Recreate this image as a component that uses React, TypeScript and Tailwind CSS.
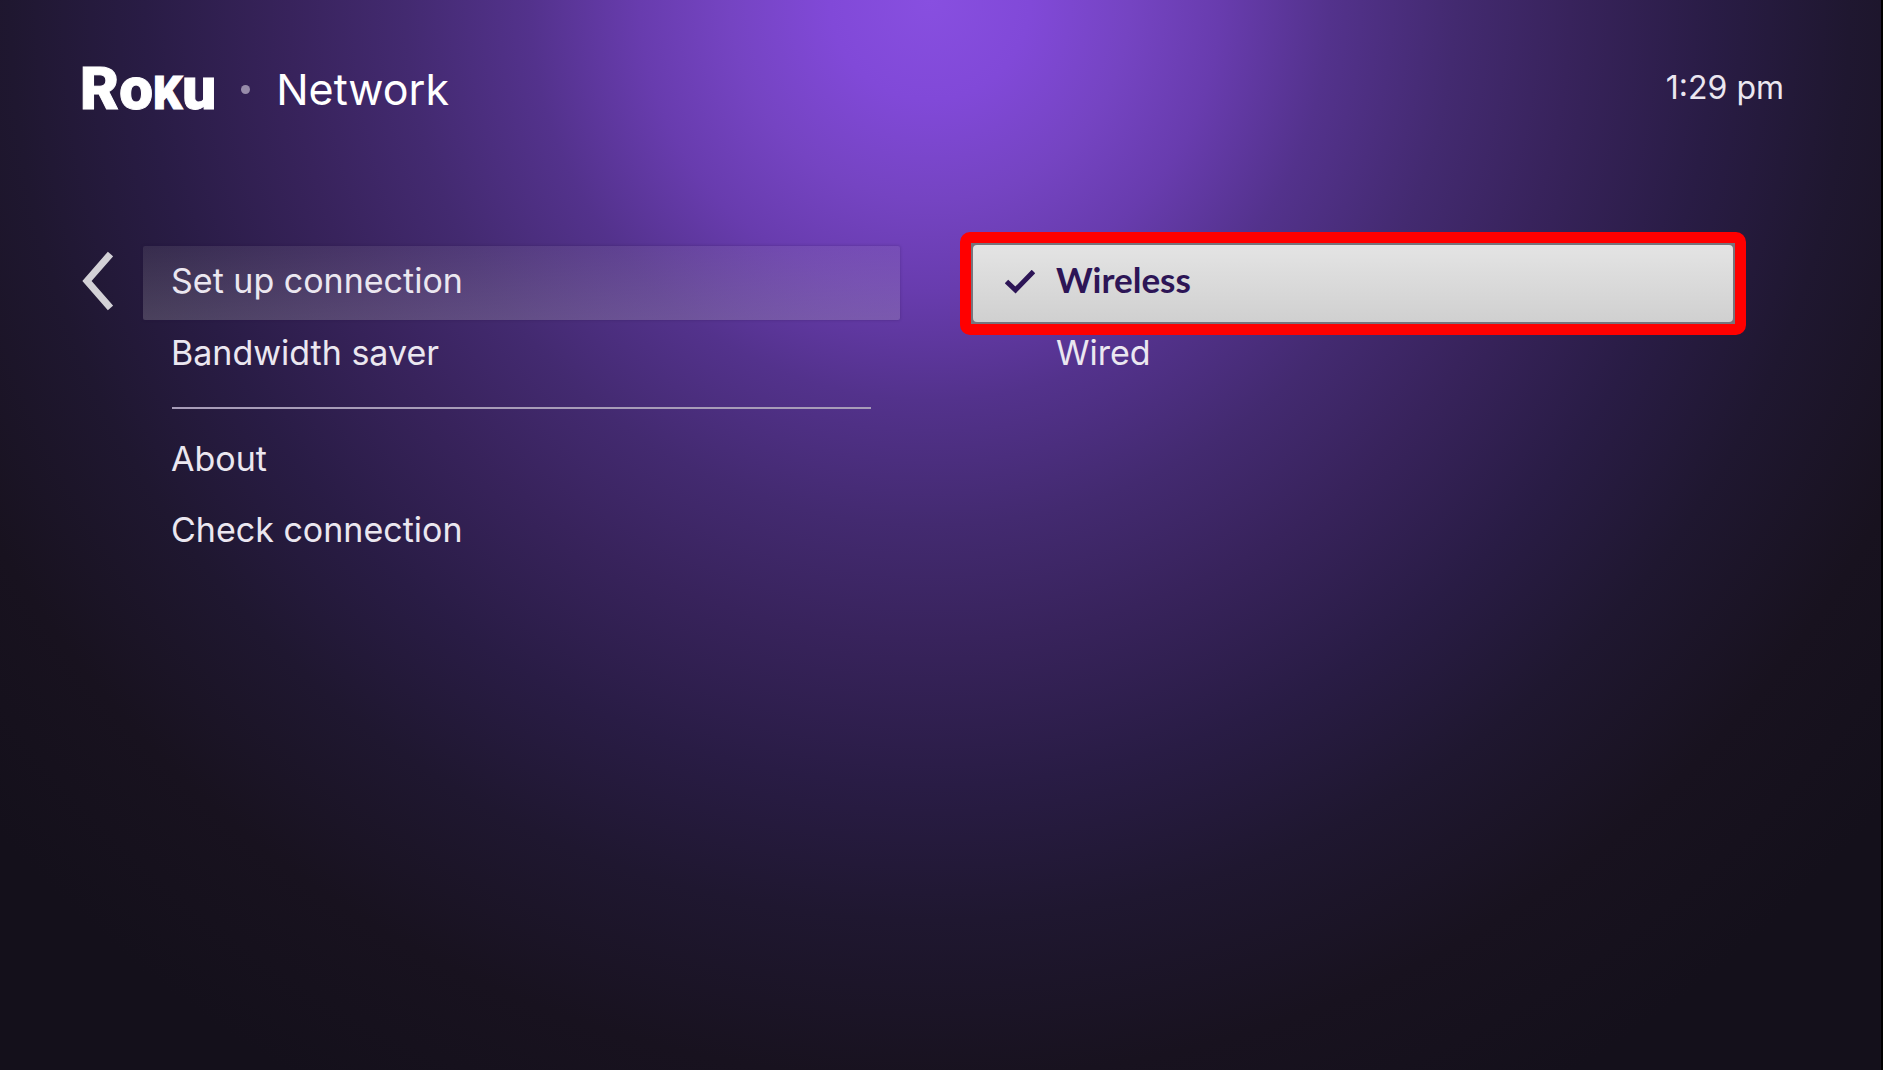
function BackArrow() {
  return (
    <svg viewBox="0 0 31 60" className="h-[60px] w-[31px]" fill="none" aria-hidden="true">
      <path d="M28.500 3 L5 30 L28.500 57" stroke="#d3d1d6" strokeWidth="7" strokeLinejoin="miter" />
    </svg>
  )
}

function Check() {
  return (
    <svg viewBox="0 0 30 24" className="h-6 w-[30px]" fill="none" aria-hidden="true">
      <path d="M1.500 11.500 L10.500 20 L28.500 1.500" stroke="#2d1556" strokeWidth="5" />
    </svg>
  )
}

const menuItem = "flex w-full items-center px-7 text-left"

export default function App() {
  return (
    <div className="min-h-screen border-r-2 border-black bg-[radial-gradient(circle_at_930px_0px,#884fe0_0px,#8149d8_100px,#7544c2_200px,#683cae_290px,#53328c_400px,#432a70_525px,#38235c_640px,#291c45_785px,#1f1730_920px,#18121f_1080px,#14101b_1250px)] font-['Inter',sans-serif] font-normal text-[#ebe7f0]">
      {/* Header */}
      <header className="flex items-center justify-between pt-[58px] pr-[97px] pl-20">
        <div className="flex items-center">
          <span className="font-['Roboto',sans-serif] text-[60px] leading-[60px] font-black text-white [-webkit-text-stroke:1px_#ffffff]">
            Ro<span className="text-[46px]">K</span>u
          </span>
          <span className="mr-[26px] mb-1 ml-[25px] size-[9px] rounded-full bg-[#978ba9]" />
          <h1 className="pb-1 text-[43px] leading-[60px] text-white">Network</h1>
        </div>
        <time className="pb-1.5 text-[32px] leading-[60px]">1:29 pm</time>
      </header>

      <main className="flex items-start pt-[108px] pr-[135px] pl-[82px] text-[34px]">
        <button type="button" aria-label="Back" className="mt-[19px] mr-[30px] shrink-0">
          <BackArrow />
        </button>

        {/* Network menu */}
        <nav className="mt-[14px] min-w-0 flex-[757]">
          <button
            type="button"
            className={`${menuItem} h-[74px] rounded-xs bg-linear-to-b from-[#b4b0b4]/12 to-[#d0ccd0]/22 pb-[5px] shadow-[0_0_3px_rgba(30,15,60,0.3)]`}
          >
            Set up connection
          </button>
          <button type="button" className={`${menuItem} h-16`}>
            Bandwidth saver
          </button>
          <hr className="mx-[29px] mt-[23px] mb-[14px] border-t-2 border-[#a79cb8]" />
          <button type="button" className={`${menuItem} h-[71px]`}>
            About
          </button>
          <button type="button" className={`${menuItem} h-[71px]`}>
            Check connection
          </button>
        </nav>

        {/* Connection type */}
        <section className="ml-[60px] min-w-0 flex-[786]">
          <div className="rounded-[10px] border-11 border-[#ff0000] bg-[#77747c]">
            <button
              type="button"
              className="flex h-[81px] w-full items-center rounded-md border-2 border-[#77747c] bg-linear-to-b from-[#e4e4e4] to-[#d0d0d0] pb-1 pl-8 text-left"
            >
              <Check />
              <span className="pb-1 pl-[21px] font-['Lato',sans-serif] text-[35px] font-bold text-[#2d1556]">Wireless</span>
            </button>
          </div>
          <button type="button" className="flex h-[34px] w-full items-center pl-24 text-left">
            Wired
          </button>
        </section>
      </main>
    </div>
  )
}
